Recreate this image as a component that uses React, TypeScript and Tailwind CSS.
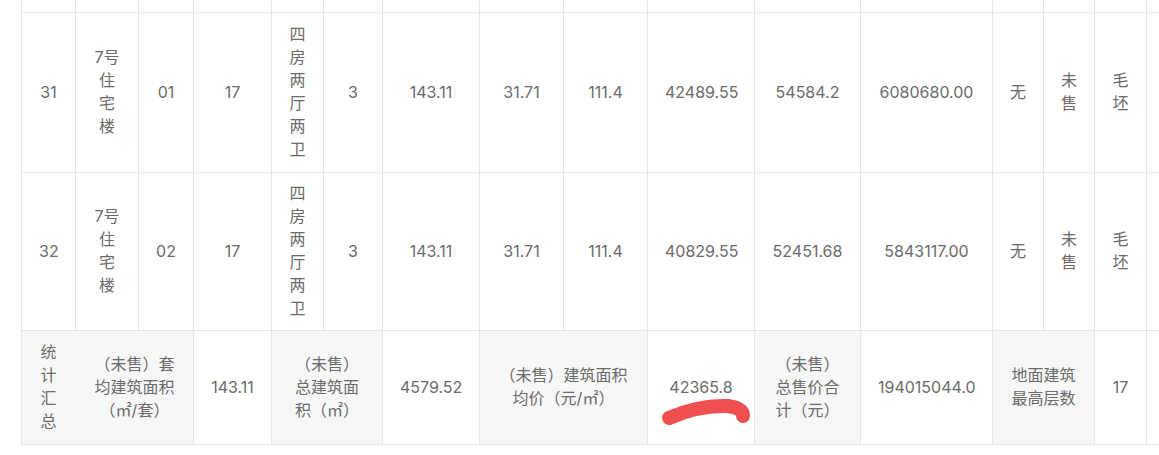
const cols = [54, 63, 55, 78, 52, 59, 97, 84, 84, 107, 106, 132, 51, 51, 52, 40];

type Unit = {
  no: string;
  unit: string;
  floor: string;
  price: string;
  total: string;
  amount: string;
};

const units: Unit[] = [
  { no: "31", unit: "01", floor: "17", price: "42489.55", total: "54584.2", amount: "6080680.00" },
  { no: "32", unit: "02", floor: "17", price: "40829.55", total: "52451.68", amount: "5843117.00" },
];

const cell = "border border-[#e6e6e6] px-[17px] text-center align-middle";
const num = "text-[16px]";
const cjk = "text-[16px] leading-[23px]";
const label = "bg-[#f7f7f7]";

export default function App() {
  return (
    <div
      className="relative h-[455px] w-[1159px] overflow-hidden bg-white pl-[21px] text-[#6b6b6b]"
      style={{ fontFamily: 'Inter, "Noto Sans CJK SC", sans-serif' }}
    >
      <table className="table-fixed border-collapse" style={{ width: 1165 }}>
        <colgroup>
          {cols.map((w, i) => (
            <col key={i} style={{ width: w }} />
          ))}
        </colgroup>
        <tbody>
          <tr className="h-[12px]">
            {cols.map((_, i) => (
              <td key={i} className="border-x border-b border-[#e6e6e6] p-0" />
            ))}
          </tr>

          {units.map((u, idx) => (
            <tr key={u.no} className={idx === 0 ? "h-[160px]" : "h-[158px]"}>
              <td className={`${cell} ${num}`}>{u.no}</td>
              <td className={`${cell} ${cjk}`}>7号住宅楼</td>
              <td className={`${cell} ${num}`}>{u.unit}</td>
              <td className={`${cell} ${num}`}>{u.floor}</td>
              <td className={`${cell} ${cjk} !px-[10px]`}>四房两厅两卫</td>
              <td className={`${cell} ${num}`}>3</td>
              <td className={`${cell} ${num}`}>143.11</td>
              <td className={`${cell} ${num}`}>31.71</td>
              <td className={`${cell} ${num}`}>111.4</td>
              <td className={`${cell} ${num}`}>{u.price}</td>
              <td className={`${cell} ${num}`}>{u.total}</td>
              <td className={`${cell} ${num}`}>{u.amount}</td>
              <td className={`${cell} ${cjk}`}>无</td>
              <td className={`${cell} ${cjk}`}>未售</td>
              <td className={`${cell} ${cjk}`}>毛坯</td>
              <td className={cell} />
            </tr>
          ))}

          <tr className="h-[114px]">
            <td className={`${cell} ${cjk} ${label} border-r-[#f7f7f7]`}>统计汇总</td>
            <td colSpan={2} className={`${cell} ${cjk} ${label}`}>
              （未售）套均建筑面积（㎡/套）
            </td>
            <td className={`${cell} ${num}`}>143.11</td>
            <td colSpan={2} className={`${cell} ${cjk} ${label}`}>
              （未售）总建筑面积（㎡）
            </td>
            <td className={`${cell} ${num}`}>4579.52</td>
            <td colSpan={2} className={`${cell} ${cjk} ${label}`}>
              （未售）建筑面积均价（元/㎡）
            </td>
            <td className={`${cell} ${num}`}>42365.8</td>
            <td className={`${cell} ${cjk} ${label}`}>（未售）总售价合计（元）</td>
            <td className={`${cell} ${num}`}>194015044.0</td>
            <td colSpan={2} className={`${cell} ${cjk} ${label}`}>
              地面建筑最高层数
            </td>
            <td className={`${cell} ${num}`}>17</td>
            <td className={cell} />
          </tr>
        </tbody>
      </table>

      {/* hand-drawn highlight under the average price */}
      <svg className="pointer-events-none absolute left-0 top-0" width="1159" height="455">
        <path
          d="M669 418 Q 698 405 728 406 Q 743 408 743 416"
          fill="none"
          stroke="#ef4f4f"
          strokeWidth="14"
          strokeLinecap="round"
        />
      </svg>
    </div>
  );
}
